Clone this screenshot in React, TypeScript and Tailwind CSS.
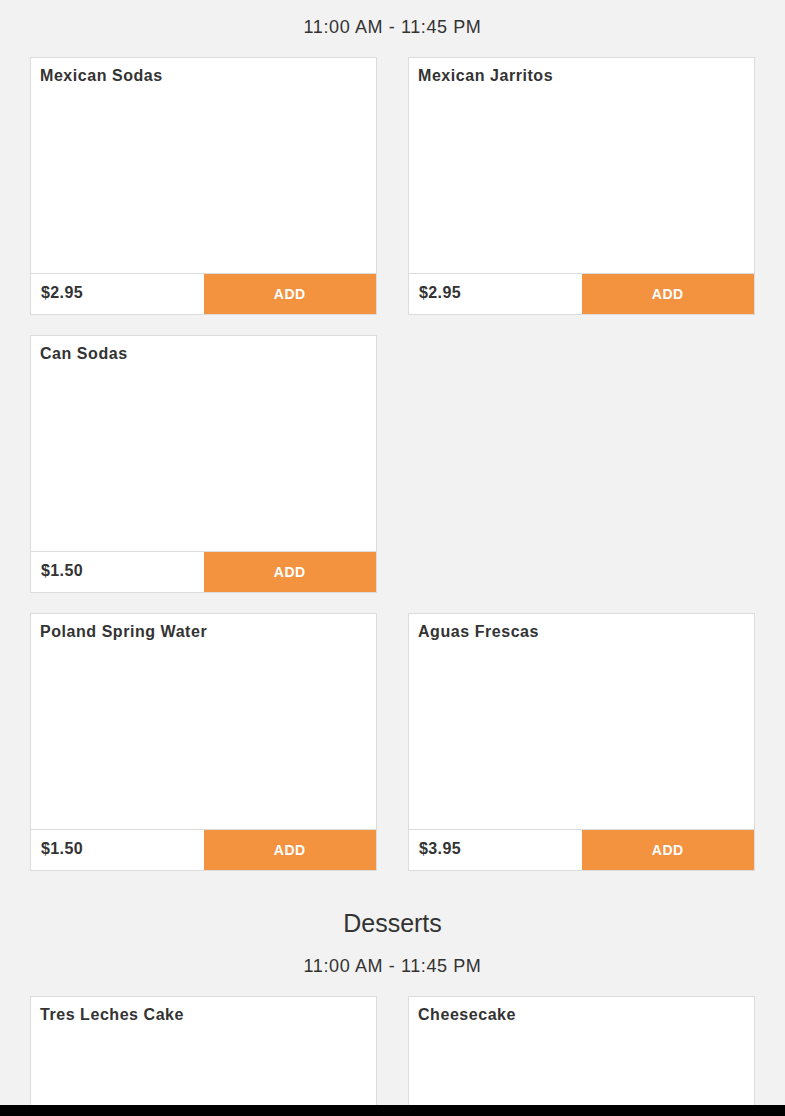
const font = { fontFamily: '"Liberation Sans", Arial, sans-serif' }

type Item = { name: string; price: string } | null

const drinks: Item[] = [
  { name: "Mexican Sodas", price: "$2.95" },
  { name: "Mexican Jarritos", price: "$2.95" },
  { name: "Can Sodas", price: "$1.50" },
  null,
  { name: "Poland Spring Water", price: "$1.50" },
  { name: "Aguas Frescas", price: "$3.95" },
]

const desserts: Item[] = [
  { name: "Tres Leches Cake", price: "$4.95" },
  { name: "Cheesecake", price: "$4.95" },
]

function Card({ item }: { item: Item }) {
  if (!item) return <div />
  return (
    <div className="flex h-[258px] flex-col border border-[#dcdcdc] bg-white">
      <div className="flex-1 px-[9px] pt-[8px] text-[16px] font-bold leading-5 tracking-[0.55px] text-[#333]">
        {item.name}
      </div>
      <div className="flex h-[41px] border-t border-[#dcdcdc]">
        <div className="flex w-1/2 shrink-0 items-center px-[10px] pb-[2px] text-[16px] font-bold tracking-[0.4px] text-[#333]">
          {item.price}
        </div>
        <button className="flex w-1/2 shrink-0 items-center justify-center bg-[#f3923f] text-[14px] font-bold tracking-[0.6px] text-white">
          ADD
        </button>
      </div>
    </div>
  )
}

function Section({ title, items }: { title?: string; items: Item[] }) {
  return (
    <div className="flex flex-col">
      {title && <h2 className="text-center text-[25px] leading-8 text-[#333]">{title}</h2>}
      <p className={`text-center text-[18px] leading-6 tracking-[0.6px] text-[#333] ${title ? "mt-[15px]" : ""}`}>
        11:00 AM - 11:45 PM
      </p>
      <div className="mt-[18px] grid grid-cols-2 gap-x-[31px] gap-y-[20px]">
        {items.map((it, i) => (
          <Card key={i} item={it} />
        ))}
      </div>
    </div>
  )
}

export default function App() {
  return (
    <div className="flex h-[1116px] flex-col overflow-hidden bg-[#f2f2f2]" style={font}>
      <div className="h-[1105px] overflow-hidden">
        <div className="flex flex-col gap-[36px] px-[30px] pt-[15px]">
          <Section items={drinks} />
          <Section title="Desserts" items={desserts} />
        </div>
      </div>
      <div className="h-[11px] bg-black" />
    </div>
  )
}
